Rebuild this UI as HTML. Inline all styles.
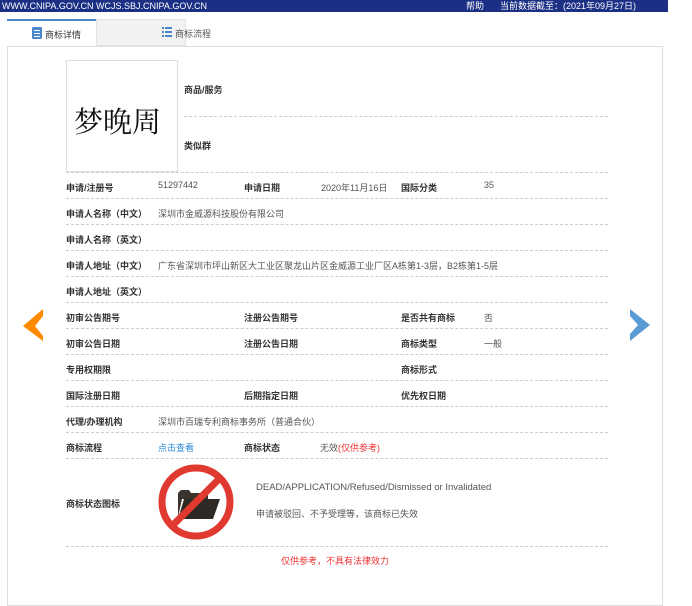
<!DOCTYPE html>
<html><head><meta charset="utf-8"><style>
body{margin:0;width:692px;height:598px;background:#fff;overflow:hidden;position:relative;font-family:"Liberation Sans","Noto Sans CJK SC",sans-serif;font-size:9px;color:#333}
.top{position:absolute;left:0;top:0;width:668px;height:12px;background:#1b2f85;color:#fff;font-size:9px;line-height:12px}
.a{position:absolute;white-space:nowrap}
.l{font-weight:bold;color:#333}
.v{color:#555}
.d{position:absolute;left:66px;width:542px;border-top:1px dashed #ccc;height:0}
</style></head><body>
<div class="top"><span class="a" style="left:2px">WWW.CNIPA.GOV.CN WCJS.SBJ.CNIPA.GOV.CN</span><span class="a" style="left:466px">帮助</span><span class="a" style="left:500px">当前数据截至：(2021年09月27日)</span></div>
<div class="a" style="left:7px;top:19px;width:89px;height:27px;border-top:2px solid #4a86c8;background:#fff;box-sizing:border-box"></div>
<div class="a" style="left:96px;top:19px;width:90px;height:27px;background:#f2f2f2;border:1px solid #e4e4e4;box-sizing:border-box"></div>
<div class="a" style="left:7px;top:46px;width:656px;height:560px;border:1px solid #ddd;box-sizing:border-box"></div>
<svg class="a" style="left:32px;top:27px" width="10" height="12"><rect x="0" y="0" width="10" height="12" rx="1.5" fill="#4a86c8"/><rect x="2" y="3" width="6" height="1" fill="#fff"/><rect x="2" y="6" width="6" height="1" fill="#fff"/><rect x="2" y="9" width="6" height="1" fill="#fff"/></svg>
<span class="a" style="left:45px;top:28px;color:#333">商标详情</span>
<svg class="a" style="left:162px;top:27px" width="10" height="10" fill="#4a86c8"><rect x="0" y="0" width="2" height="2"/><rect x="3" y="0" width="7" height="2"/><rect x="0" y="4" width="2" height="2"/><rect x="3" y="4" width="7" height="2"/><rect x="0" y="8" width="2" height="2"/><rect x="3" y="8" width="7" height="2"/></svg>
<span class="a" style="left:175px;top:27px;color:#555">商标流程</span>
<div class="a" style="left:66px;top:60px;width:112px;height:112px;border:1px solid #ddd;box-sizing:border-box"></div>
<span class="a" style="left:74px;top:100px;font-size:29px;font-family:'Liberation Serif','Noto Serif CJK SC',serif;color:#111">梦晚周</span>
<span class="a l" style="left:184px;top:83px">商品/服务</span>
<div class="d" style="left:184px;width:424px;top:116px"></div>
<span class="a l" style="left:184px;top:139px">类似群</span>
<div class="d" style="top:172px"></div>

<span class="a l" style="left:66px;top:181px">申请/注册号</span><span class="a v" style="left:158px;top:180px">51297442</span>
<span class="a l" style="left:244px;top:181px">申请日期</span><span class="a v" style="left:321px;top:181px">2020年11月16日</span>
<span class="a l" style="left:401px;top:181px">国际分类</span><span class="a v" style="left:484px;top:180px">35</span>
<div class="d" style="top:198px"></div>
<span class="a l" style="left:66px;top:207px">申请人名称（中文）</span><span class="a v" style="left:158px;top:207px">深圳市金威源科技股份有限公司</span>
<div class="d" style="top:224px"></div>
<span class="a l" style="left:66px;top:233px">申请人名称（英文）</span>
<div class="d" style="top:250px"></div>
<span class="a l" style="left:66px;top:259px">申请人地址（中文）</span><span class="a v" style="left:158px;top:259px">广东省深圳市坪山新区大工业区聚龙山片区金威源工业厂区A栋第1-3层，B2栋第1-5层</span>
<div class="d" style="top:276px"></div>
<span class="a l" style="left:66px;top:285px">申请人地址（英文）</span>
<div class="d" style="top:302px"></div>
<span class="a l" style="left:66px;top:311px">初审公告期号</span><span class="a l" style="left:244px;top:311px">注册公告期号</span><span class="a l" style="left:401px;top:311px">是否共有商标</span><span class="a v" style="left:484px;top:311px">否</span>
<div class="d" style="top:328px"></div>
<span class="a l" style="left:66px;top:337px">初审公告日期</span><span class="a l" style="left:244px;top:337px">注册公告日期</span><span class="a l" style="left:401px;top:337px">商标类型</span><span class="a v" style="left:484px;top:337px">一般</span>
<div class="d" style="top:354px"></div>
<span class="a l" style="left:66px;top:363px">专用权期限</span><span class="a l" style="left:401px;top:363px">商标形式</span>
<div class="d" style="top:380px"></div>
<span class="a l" style="left:66px;top:389px">国际注册日期</span><span class="a l" style="left:244px;top:389px">后期指定日期</span><span class="a l" style="left:401px;top:389px">优先权日期</span>
<div class="d" style="top:406px"></div>
<span class="a l" style="left:66px;top:415px">代理/办理机构</span><span class="a v" style="left:158px;top:415px">深圳市百瑞专利商标事务所（普通合伙）</span>
<div class="d" style="top:432px"></div>
<span class="a l" style="left:66px;top:441px">商标流程</span><span class="a" style="left:158px;top:441px;color:#2a8ad8">点击查看</span>
<span class="a l" style="left:244px;top:441px">商标状态</span><span class="a v" style="left:320px;top:441px">无效<span style="color:#e33">(仅供参考)</span></span>
<div class="d" style="top:458px"></div>
<span class="a l" style="left:66px;top:497px">商标状态图标</span>
<svg class="a" style="left:158px;top:463px" width="80" height="80"><path d="M20 54 L20 30 L23 27 L31 27 L33 30 L50 30 L50 36 L24 36 L20 54Z" fill="#3a332e"/><path d="M20 56 L26 36 L62 36 L55 56Z" fill="#2f2925"/><circle cx="38" cy="39" r="34" fill="none" stroke="#e03a30" stroke-width="7"/><line x1="62" y1="15" x2="14" y2="63" stroke="#e03a30" stroke-width="7"/></svg>
<span class="a v" style="left:256px;top:482px;font-size:9.5px">DEAD/APPLICATION/Refused/Dismissed or Invalidated</span>
<span class="a v" style="left:256px;top:507px">申请被驳回、不予受理等，该商标已失效</span>
<div class="d" style="top:546px"></div>
<span class="a" style="left:281px;top:554px;color:#e33">仅供参考，不具有法律效力</span>
<svg class="a" style="left:22px;top:308px" width="24" height="34"><path d="M1 18 L21 1 L21 8 L13 18 L21 28 L21 33Z" fill="#ff8a00"/></svg>
<svg class="a" style="left:628px;top:308px" width="24" height="34"><path d="M22 17 L2 1 L2 8 L10 17 L2 26 L2 33Z" fill="#5b9bd5"/></svg>
</body></html>
